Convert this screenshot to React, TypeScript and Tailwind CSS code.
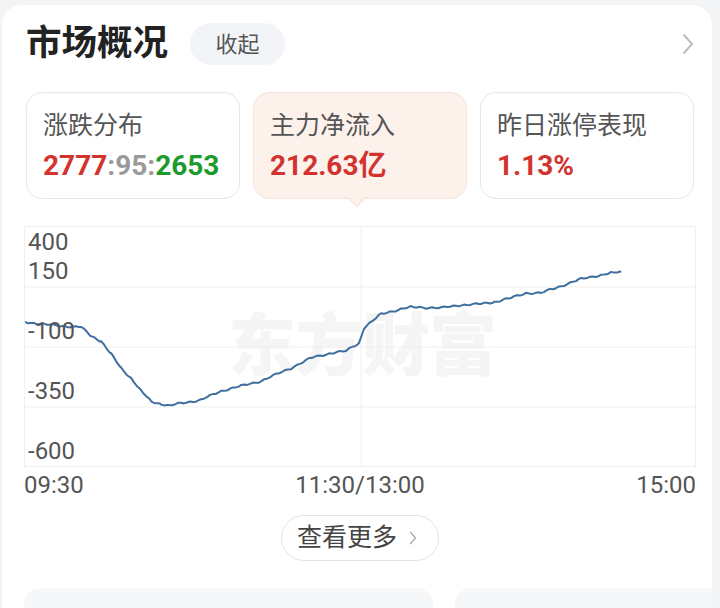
import React from "react";

const FONT = "font-['Roboto','Noto_Sans_CJK_SC',sans-serif]";

// intraday net inflow curve, in chart pixel coords (x: 0..672, y: 0..240)
const RAW: [number, number][] = [
  [24, 321], [40, 323], [60, 325], [80, 326], [90, 335], [100, 340], [110, 353],
  [120, 367], [130, 377], [140, 390], [150, 400], [160, 403], [168, 405], [180, 402],
  [200, 399], [220, 390], [240, 385], [260, 380], [290, 367], [310, 357], [330, 352],
  [345, 350], [358, 342], [363, 327], [380, 313], [400, 308], [410, 306], [440, 307],
  [460, 304], [480, 303], [493, 301], [510, 297], [525, 292], [540, 292], [560, 285],
  [580, 278], [600, 274], [610, 272], [620, 271],
];

function buildLine() {
  const pts: string[] = [];
  let i = 0;
  for (let s = 0; s < RAW.length - 1; s++) {
    const [x0, y0] = RAW[s];
    const [x1, y1] = RAW[s + 1];
    for (let x = x0; x < x1; x += 3) {
      const t = (x - x0) / (x1 - x0);
      const jitter = 0.7 * Math.sin(i * 1.7) + 0.5 * Math.sin(i * 0.53);
      pts.push(`${(x - 24).toFixed(1)},${(y0 + (y1 - y0) * t - 226 + jitter).toFixed(1)}`);
      i++;
    }
  }
  const last = RAW[RAW.length - 1];
  pts.push(`${last[0] - 24},${last[1] - 226}`);
  return pts.join(" ");
}

function Chevron({ className }: { className?: string }) {
  return (
    <svg viewBox="0 0 12 22" className={className} fill="none">
      <path d="M2 2l8 9-8 9" stroke="currentColor" strokeWidth="2" strokeLinecap="round" strokeLinejoin="round" />
    </svg>
  );
}

function StatCard({
  label,
  children,
  active,
}: {
  label: string;
  children: React.ReactNode;
  active?: boolean;
}) {
  return (
    <div
      className={`relative flex h-[107px] w-[214px] flex-col rounded-[16px] border px-[16px] pt-[16px] ${
        active ? "border-[#f7e2da] bg-[#fdf1ec]" : "border-[#e6e6e6] bg-white"
      }`}
    >
      <div className="text-[25px] leading-[34px] text-[#555]">{label}</div>
      <div className="mt-[5px] text-[28px] font-bold leading-[36px]">{children}</div>
      {active && (
        <div className="absolute bottom-[-6px] left-[96px] h-[14px] w-[14px] rotate-45 border-b border-r border-[#f7e2da] bg-[#fdf1ec]" />
      )}
    </div>
  );
}

export default function App() {
  const line = buildLine();
  return (
    <div className={`h-[608px] w-[720px] overflow-hidden bg-[#f3f4f6] pl-[2px] pt-[5px] ${FONT}`}>
      <div className="relative h-[620px] w-[710px] overflow-hidden rounded-t-[20px] bg-white pt-[18px]">
        {/* header */}
        <div className="flex h-[42px] items-center pl-[24px] pr-[18px]">
          <h1 className="text-[35.5px] font-bold leading-none text-[#222]">市场概况</h1>
          <button className="ml-[22px] flex h-[42px] w-[95px] items-center justify-center rounded-full bg-[#f2f4f7] text-[22px] text-[#555]">
            收起
          </button>
          <Chevron className="ml-auto h-[22px] w-[12px] text-[#bdbdbd]" />
        </div>

        {/* stat cards */}
        <div className="mt-[27px] flex gap-[13px] pl-[24px]">
          <StatCard label="涨跌分布">
            <span className="text-[#d2332f]">2777</span>
            <span className="text-[#9a9a9a]">:95:</span>
            <span className="text-[#1c9a2b]">2653</span>
          </StatCard>
          <StatCard label="主力净流入" active>
            <span className="text-[#d2332f]">212.63亿</span>
          </StatCard>
          <StatCard label="昨日涨停表现">
            <span className="text-[#d2332f]">1.13%</span>
          </StatCard>
        </div>

        {/* chart */}
        <div className="ml-[22px] mt-[27px] w-[672px]">
          <div className="relative h-[241px] border border-[#efefef]">
            <div className="absolute left-[203px] top-[86px] select-none text-[68px] font-black leading-none tracking-[-1px] text-[#f5f5f5]">
              东方财富
            </div>
            <svg className="absolute inset-0" width="672" height="240" viewBox="0 0 672 240">
              {[60, 120, 180].map((y) => (
                <line key={y} x1="0" x2="672" y1={y} y2={y} stroke="#efefef" strokeWidth="1" />
              ))}
              <line x1="336" x2="336" y1="0" y2="240" stroke="#efefef" strokeWidth="1" />
              <polyline points={line} fill="none" stroke="#3f6f9f" strokeWidth="2" strokeLinejoin="round" />
            </svg>
            <div className="absolute left-[3px] top-[3px] text-[24px] leading-[24px] text-[#555]">400</div>
            <div className="absolute left-[3px] top-[32px] text-[24px] leading-[24px] text-[#555]">150</div>
            <div className="absolute left-[3px] top-[92px] text-[24px] leading-[24px] text-[#555]">-100</div>
            <div className="absolute left-[3px] top-[152px] text-[24px] leading-[24px] text-[#555]">-350</div>
            <div className="absolute left-[3px] top-[212px] text-[24px] leading-[24px] text-[#555]">-600</div>
          </div>
          <div className="flex justify-between pt-[4px] text-[24px] leading-[28px] text-[#555]">
            <span>09:30</span>
            <span>11:30/13:00</span>
            <span>15:00</span>
          </div>
          <div className="mt-[16px] flex justify-center">
            <button className="flex h-[46px] w-[158px] items-center gap-[12px] rounded-full border border-[#e3e3e3] pl-[15px] text-[25px] text-[#444]">
              查看更多
              <Chevron className="h-[14px] w-[8px] text-[#aaa]" />
            </button>
          </div>
        </div>

        {/* next section */}
        <div className="mt-[27px] flex gap-[22px] pl-[22px]">
          <div className="h-[40px] w-[409px] shrink-0 rounded-t-[16px] bg-[#f6f7f9]" />
          <div className="h-[40px] w-[409px] shrink-0 rounded-t-[16px] bg-[#f6f7f9]" />
        </div>
      </div>
    </div>
  );
}
